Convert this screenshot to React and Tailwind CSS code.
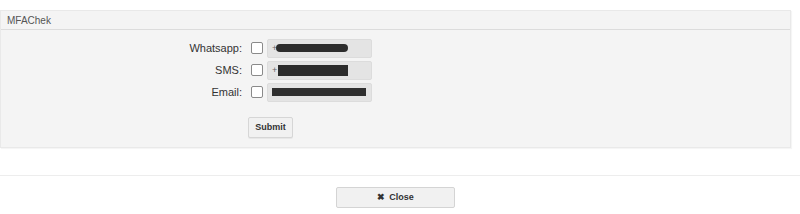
import React from "react";

function Row({ label, children }) {
  return (
    <div className="flex items-center h-[18px]">
      <div className="w-[250px] text-right pr-[9px] text-[11px] text-[#333]">{label}</div>
      <div className="w-[12px] h-[12px] rounded-[2px] border border-[#8a8a8a] bg-white"></div>
      <div className="ml-[4px] w-[105px] h-[19px] bg-[#e4e4e4] border border-[#dcdcdc] rounded-[2px] flex items-center pl-[4px]">
        {children}
      </div>
    </div>
  );
}

export default function App() {
  return (
    <div className="w-[800px] h-[214px] bg-white relative" style={{ fontFamily: '"Liberation Sans", Arial, sans-serif' }}>
      <div className="pt-[10px] pr-[9px]">
        <div className="bg-[#f4f4f4] border border-[#e9e9e9] shadow-[1px_1px_1px_rgba(0,0,0,0.04)]">
          <div className="h-[19px] border-b border-[#dcdcdc] pl-[6px] text-[10px] text-[#555] leading-[19px]">MFAChek</div>
          <div className="pt-[9px] pb-[9px] flex flex-col gap-[4px]">
            <Row label="Whatsapp:">
              <span className="text-[9px] text-[#666] leading-none">+</span>
              <div className="w-[72px] h-[8px] bg-[#2c2c2c] rounded-[4px] -ml-[1px]"></div>
            </Row>
            <Row label="SMS:">
              <span className="text-[9px] text-[#666] leading-none">+</span>
              <div className="w-[70px] h-[11px] bg-[#2c2c2c] ml-[1px]"></div>
            </Row>
            <Row label="Email:">
              <div className="w-[94px] h-[8px] bg-[#2f2f2f]"></div>
            </Row>
            <div className="pl-[247px] pt-[12px]">
              <div className="w-[45px] h-[21px] bg-[#f1f1f1] border border-[#d6d6d6] rounded-[2px] flex items-center justify-center text-[9px] font-bold text-[#333] shadow-[0_1px_0_rgba(0,0,0,0.05)]">Submit</div>
            </div>
          </div>
        </div>
      </div>
      <div className="mt-[27px] border-t border-[#ededed]"></div>
      <div className="flex justify-center pt-[11px]">
        <div className="ml-[-9px] w-[119px] h-[21px] bg-[#f1f1f1] border border-[#d4d4d4] rounded-[2px] flex items-center justify-center gap-[4px] text-[9px] font-bold text-[#333]">
          <span className="text-[9px] leading-none">✖</span>
          <span>Close</span>
        </div>
      </div>
    </div>
  );
}
